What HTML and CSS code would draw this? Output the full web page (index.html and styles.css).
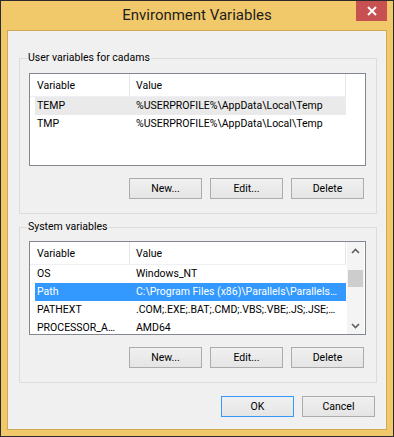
FILE: index.html
```html
<!DOCTYPE html>
<html lang="en">
<head>
  <meta charset="UTF-8">
  <meta name="viewport" content="width=device-width, initial-scale=1.0">
  <title>Environment Variables</title>
  <link rel="stylesheet" href="styles.css">
</head>
<body>
  <div class="window">
    <div class="titlebar">
      <span class="title">Environment Variables</span>
      <button class="close" title="Close">
        <svg width="10" height="10" viewBox="0 0 10 10">
          <path d="M1 1 L9 9 M9 1 L1 9" stroke="#fff" stroke-width="2" />
        </svg>
      </button>
    </div>

    <div class="client">
      <!-- user variables -->
      <div class="group">
        <div class="group-title">User variables for cadams</div>
        <div class="list">
          <div class="list-body">
            <div class="list-head">
              <span class="head-name">Variable</span>
              <span class="head-value">Value</span>
            </div>
            <div class="row row-hot">
              <span class="cell-name">TEMP</span>
              <span class="cell-value">%USERPROFILE%\AppData\Local\Temp</span>
            </div>
            <div class="row">
              <span class="cell-name">TMP</span>
              <span class="cell-value">%USERPROFILE%\AppData\Local\Temp</span>
            </div>
          </div>
        </div>
        <div class="actions">
          <button class="btn">New...</button>
          <button class="btn">Edit...</button>
          <button class="btn">Delete</button>
        </div>
      </div>

      <!-- system variables -->
      <div class="group">
        <div class="group-title">System variables</div>
        <div class="list list-tall">
          <div class="list-body">
            <div class="list-head">
              <span class="head-name">Variable</span>
              <span class="head-value">Value</span>
            </div>
            <div class="row">
              <span class="cell-name">OS</span>
              <span class="cell-value">Windows_NT</span>
            </div>
            <div class="row row-selected">
              <span class="cell-name">Path</span>
              <span class="cell-value">C:\Program Files (x86)\Parallels\Parallels Tools\Applications;C:\Windows\system32</span>
            </div>
            <div class="row">
              <span class="cell-name">PATHEXT</span>
              <span class="cell-value">.COM;.EXE;.BAT;.CMD;.VBS;.VBE;.JS;.JSE;.WSF;.WSH;.MSC</span>
            </div>
            <div class="row">
              <span class="cell-name">PROCESSOR_ARCHITECTURE</span>
              <span class="cell-value">AMD64</span>
            </div>
          </div>
          <div class="scrollbar">
            <div class="scroll-arrow">
              <svg width="9" height="6" viewBox="0 0 9 6">
                <path d="M1 5 L4.5 1.5 L8 5" fill="none" stroke="#606060" stroke-width="1.6" />
              </svg>
            </div>
            <div class="scroll-track">
              <div class="scroll-thumb"></div>
            </div>
            <div class="scroll-arrow">
              <svg width="9" height="6" viewBox="0 0 9 6">
                <path d="M1 1 L4.5 4.5 L8 1" fill="none" stroke="#606060" stroke-width="1.6" />
              </svg>
            </div>
          </div>
        </div>
        <div class="actions">
          <button class="btn">New...</button>
          <button class="btn">Edit...</button>
          <button class="btn">Delete</button>
        </div>
      </div>

      <div class="dialog-actions">
        <button class="btn btn-default">OK</button>
        <button class="btn">Cancel</button>
      </div>
    </div>
  </div>
</body>
</html>
```

FILE: styles.css
```css
body {
  margin: 0;
  font-family: Roboto, "Noto Sans", sans-serif;
  font-size: 10.5px;
  color: #000;
}

.window {
  width: 394px;
  height: 437px;
  box-sizing: border-box;
  border: 1px solid #2b2b2b;
  background-color: #f1c96b; /* Windows 8 golden frame */
  padding: 0 6px 6px 6px;
  display: flex;
  flex-direction: column;
}

.titlebar {
  height: 29px;
  display: grid;
  grid-template-columns: 31px 1fr 31px;
}

.title {
  grid-column: 2;
  align-self: center;
  text-align: center;
  font-size: 15px;
  line-height: 20px;
  color: #1e1e1e;
  padding-bottom: 1px;
}

.close {
  grid-column: 3;
  align-self: start;
  width: 31px;
  height: 20px;
  border: none;
  padding: 0;
  background-color: #c75050;
  display: flex;
  align-items: center;
  justify-content: center;
}

.client {
  flex: 1;
  background-color: #f0f0f0;
  border: 1px solid #d1a953;
  padding: 27px 9px 0 11px;
}

/* group boxes */
.group {
  border: 1px solid #dcdcdc;
  padding: 0 10px 14px 9px;
  margin-bottom: 13px;
}

.group-title {
  width: fit-content;
  margin: -9px 0 0 -2px;
  padding: 0 1px;
  line-height: 16px;
  background-color: #f0f0f0;
}

/* list views */
.list {
  margin-top: 7px;
  height: 93px;
  box-sizing: border-box;
  border: 1px solid #828790;
  background-color: #fff;
  display: flex;
  overflow: hidden;
}

.list-tall {
  margin-top: 6px;
  height: 94px;
}

.list-body {
  flex: 1;
  min-width: 0;
}

.list-head {
  display: flex;
  height: 23px;
  width: 316px;
  box-sizing: border-box;
  border-bottom: 1px solid #eef0f5;
  line-height: 23px;
}

.head-name {
  width: 100px;
  box-sizing: border-box;
  padding-left: 7px;
  border-right: 1px solid #e5e5e5;
}

.head-value {
  width: 216px;
  box-sizing: border-box;
  padding-left: 6px;
  border-right: 1px solid #e5e5e5;
}

.row {
  display: flex;
  height: 18px;
  width: 311px;
  margin-left: 5px;
  line-height: 18px;
  white-space: nowrap;
}

.row-hot {
  background-color: #eaeaea;
}

.row-selected {
  background-color: #3399ff;
  color: #fff;
}

.cell-name {
  width: 95px;
  box-sizing: border-box;
  padding: 0 9px 0 2px;
  overflow: hidden;
  text-overflow: ellipsis;
}

.cell-value {
  flex: 1;
  min-width: 0;
  padding: 0 8px 0 6px;
  overflow: hidden;
  text-overflow: ellipsis;
}

/* scrollbar of the system list */
.scrollbar {
  width: 17px;
  margin-right: 1px;
  background-color: #f4f4f4;
  display: flex;
  flex-direction: column;
}

.scroll-arrow {
  height: 17px;
  display: flex;
  align-items: center;
  justify-content: center;
}

.scroll-track {
  flex: 1;
  padding: 11px 1px 0 1px;
}

.scroll-thumb {
  height: 17px;
  background-color: #cdcdcd;
}

/* buttons */
.actions,
.dialog-actions {
  display: flex;
  justify-content: flex-end;
  gap: 8px;
}

.actions {
  margin: 12px 2px 0 0;
}

.dialog-actions {
  margin-right: 2px;
}

.btn {
  width: 73px;
  height: 21px;
  padding: 0;
  border: 1px solid #acacac;
  background: linear-gradient(#f0f0f0, #e5e5e5);
  font-family: inherit;
  font-size: 10.5px;
  color: #000;
}

.btn-default {
  border-color: #3399ff;
}
```
